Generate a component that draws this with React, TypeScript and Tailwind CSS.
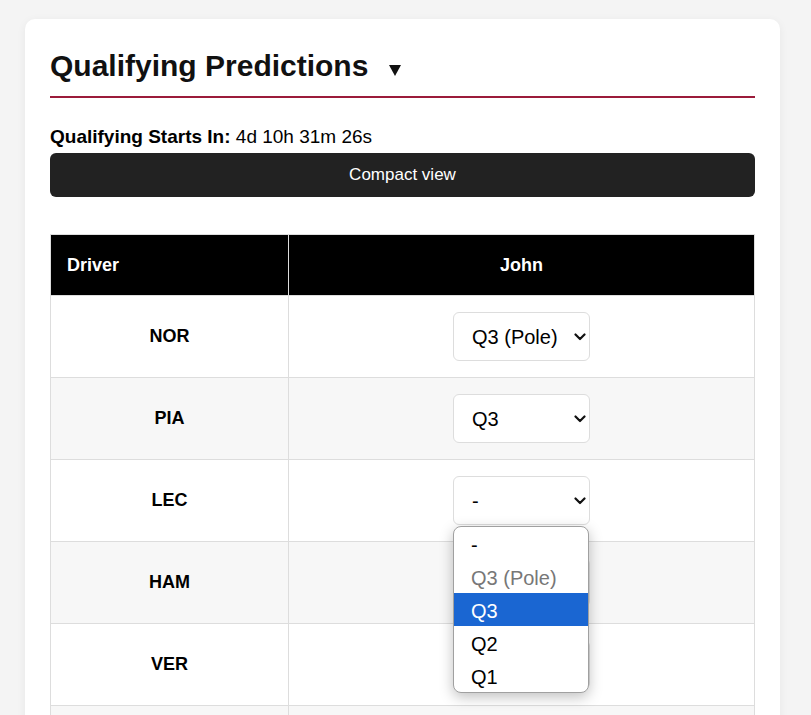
const drivers = [
  { code: "NOR", pick: "Q3 (Pole)" },
  { code: "PIA", pick: "Q3" },
  { code: "LEC", pick: "-", open: true },
  { code: "HAM", pick: "-" },
  { code: "VER", pick: "-" },
  { code: "RUS", pick: "-" },
  { code: "ANT", pick: "-" },
];

const options = ["-", "Q3 (Pole)", "Q3", "Q2", "Q1"];

const Chevron = () => (
  <svg width="12" height="8" viewBox="0 0 12 8" className="pointer-events-none absolute right-[4px] top-1/2 -translate-y-1/2">
    <path d="M1.5 1.5 L6 6 L10.5 1.5" fill="none" stroke="#111" strokeWidth="2.2" strokeLinecap="round" strokeLinejoin="round" />
  </svg>
);

const App = () => (
  <div className="min-h-[715px] bg-[#f4f4f4] pt-[19px] font-['Liberation_Sans',Arial,sans-serif] text-black">
    <div className="ml-[25px] w-[755px] rounded-[10px] bg-white px-[25px] pt-[30px] pb-10 shadow-[0_2px_10px_rgba(0,0,0,0.06)]">
      {/* Heading */}
      <h1 className="flex items-center border-b-2 border-[#9b1b3a] pb-[13px] text-[30px] font-bold leading-[34px] text-[#111]">
        Qualifying Predictions
        <svg width="12" height="11" viewBox="0 0 12 11" className="ml-[21px] mt-[9px]">
          <polygon points="0,0 12,0 6,11" fill="#111" />
        </svg>
      </h1>

      <p className="mt-[28px] text-[19px] leading-[21px]">
        <span className="font-bold">Qualifying Starts In:</span> 4d 10h 31m 26s
      </p>

      <button
        type="button"
        className="mt-[6px] h-[44px] w-full rounded-[6px] bg-[#222] text-[17px] text-white"
      >
        Compact view
      </button>

      {/* Predictions table */}
      <table className="mt-[37px] w-full border-collapse border border-[#ddd] text-[18px]">
        <thead>
          <tr className="bg-black text-white">
            <th className="h-[61px] w-[238px] border-r border-[#ddd] px-4 text-left font-bold">Driver</th>
            <th className="h-[61px] px-4 text-center font-bold">John</th>
          </tr>
        </thead>
        <tbody>
          {drivers.map((d, i) => (
            <tr key={d.code} className={i % 2 === 1 ? "bg-[#f7f7f7]" : "bg-white"}>
              <td className="h-[82px] border border-[#ddd] text-center font-bold">{d.code}</td>
              <td className="h-[82px] border border-[#ddd] text-center">
                <div className="relative mx-auto w-[137px]">
                  <select
                    defaultValue={d.pick}
                    className="h-[49px] w-full appearance-none rounded-[6px] border border-[#ddd] bg-white pl-[18px] text-left text-[20px] text-black outline-none"
                  >
                    {options.map((o) => (
                      <option key={o} value={o}>{o}</option>
                    ))}
                  </select>
                  <Chevron />
                  {d.open && (
                    <ul className="absolute left-0 top-[50px] z-10 w-[136px] overflow-hidden rounded-[8px] border border-[#a0a0a0] bg-white text-left text-[20px] shadow-[0_4px_14px_rgba(0,0,0,0.25)]">
                      {options.map((o) => (
                        <li
                          key={o}
                          className={
                            "h-[33px] pl-[17px] pt-[2px] leading-[33px] " +
                            (o === "Q3" ? "bg-[#1a66d2] text-white" : o === "Q3 (Pole)" ? "text-[#777]" : "text-black")
                          }
                        >
                          {o}
                        </li>
                      ))}
                    </ul>
                  )}
                </div>
              </td>
            </tr>
          ))}
        </tbody>
      </table>
    </div>
  </div>
);

export default App;
